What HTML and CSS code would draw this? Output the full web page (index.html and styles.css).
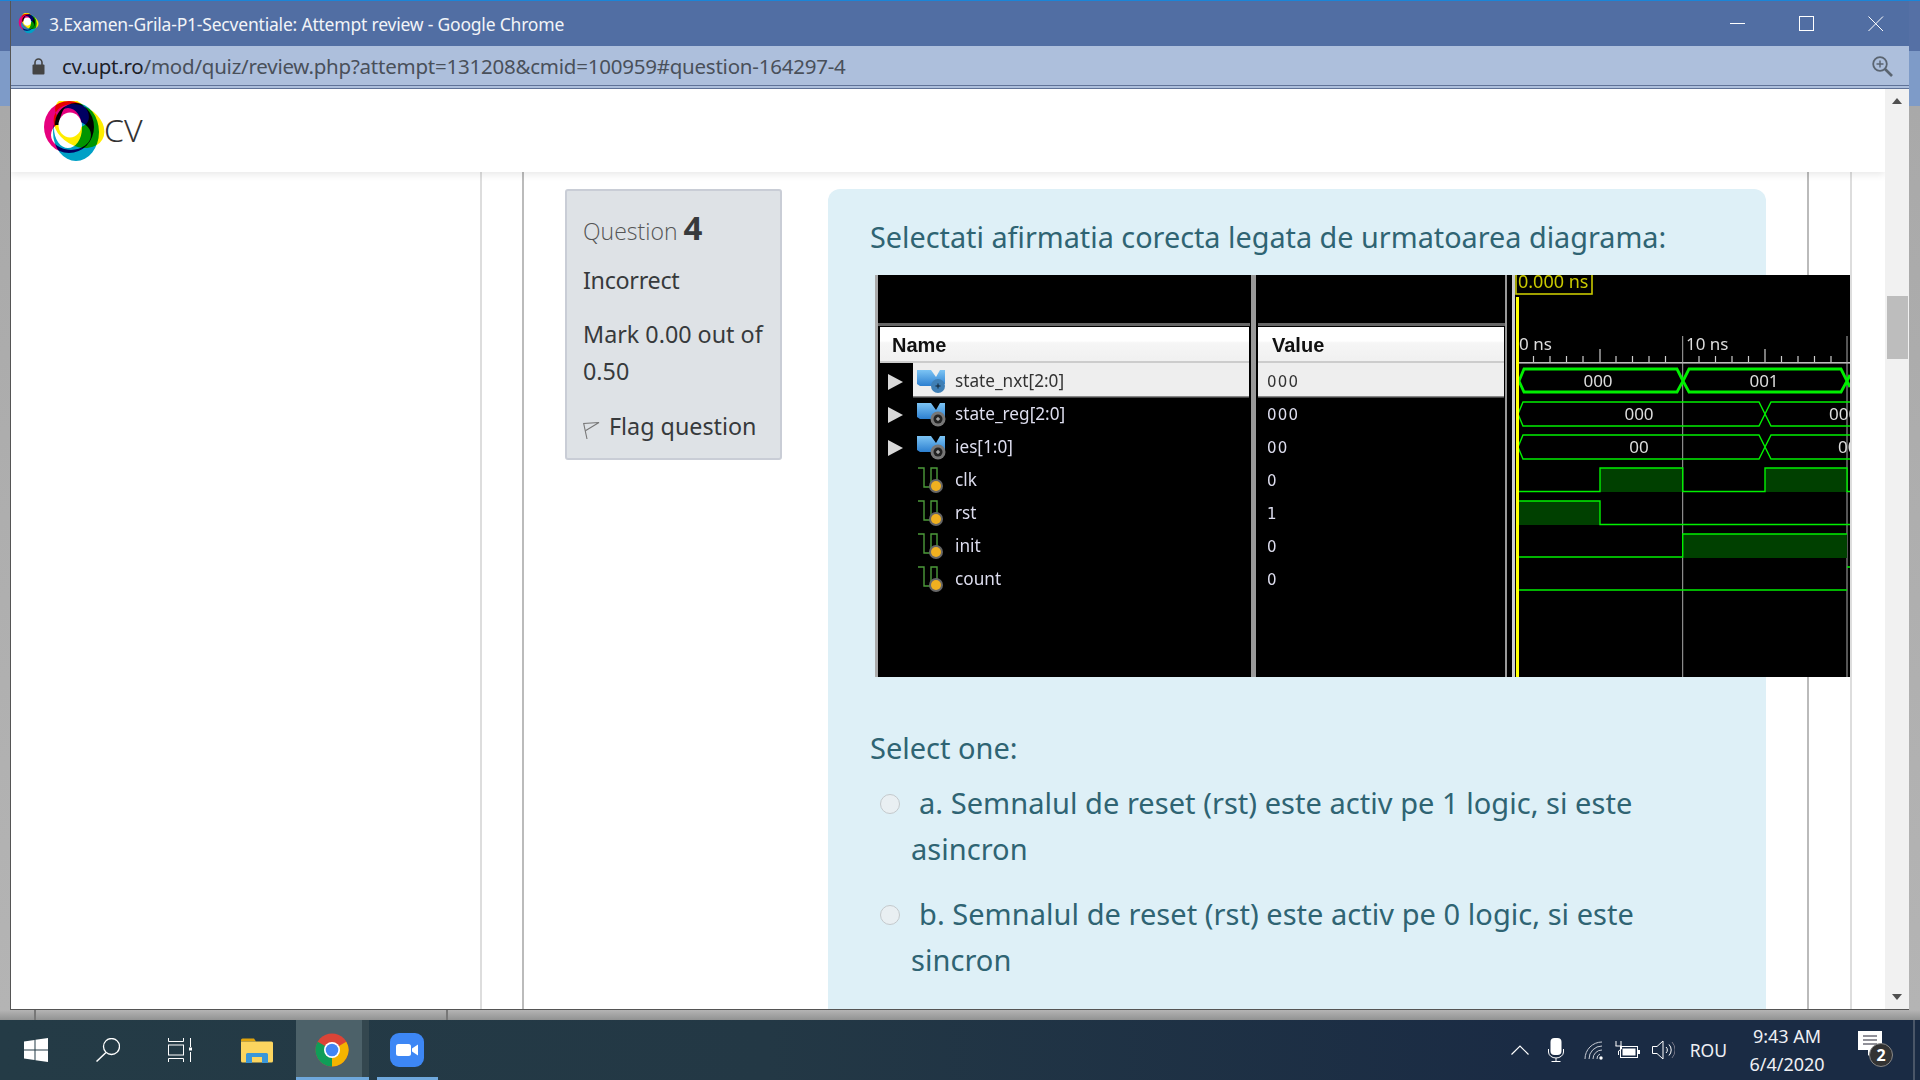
FILE: index.html
```html
<!doctype html>
<html>
<head>
    <title>3.Examen-Grila-P1-Secventiale: Attempt review</title>
    <link rel="stylesheet" href="styles.css">
</head>
<body>
<div class="desktop">
    <div class="window">
        <div class="titlebar">
            <svg class="favicon" viewBox="42 98 64 64">
                <defs>
                    <g id="logo-mark">
                        <path class="logo-ring" fill="#e6007e" fill-rule="evenodd" d="M44 126a25 26 0 1 0 50 0a25 26 0 1 0 -50 0ZM51 134a20 15 0 1 0 40 0a20 15 0 1 0 -40 0Z"/>
                        <path class="logo-ring" fill="#00a0c6" fill-rule="evenodd" d="M53 131a23 29 0 1 0 46 0a23 29 0 1 0 -46 0ZM54 127a14 20 0 1 0 28 0a14 20 0 1 0 -28 0Z"/>
                        <path class="logo-ring" fill="#ffed00" fill-rule="evenodd" transform="rotate(30 79 125)" d="M52 125a27 20 0 1 0 54 0a27 20 0 1 0 -54 0ZM48.400 117.200a18 13 0 1 0 36 0a18 13 0 1 0 -36 0Z"/>
                        <path d="M55 124C55 114 60 108 66 105C62 110 60 116 59 124Z" fill="#000"/>
                        <ellipse cx="70" cy="124" rx="11.500" ry="12.500" fill="#fff"/>
                    </g>
                </defs>
                <use href="#logo-mark"/>
            </svg>
            <span class="title-text">3.Examen-Grila-P1-Secventiale: Attempt review - Google Chrome</span>
            <div class="controls">
                <svg class="control" viewBox="0 0 16 16"><path d="M0 7.500H15" stroke="#fff" fill="none"/></svg>
                <svg class="control" viewBox="0 0 16 16"><rect x="0.500" y="0.500" width="14" height="14" stroke="#fff" fill="none"/></svg>
                <svg class="control" viewBox="0 0 16 16"><path d="M0.500 0.500L15 15M15 0.500L0.500 15" stroke="#fff" fill="none"/></svg>
            </div>
        </div>
        <div class="addressbar">
            <svg class="lock" viewBox="0 0 13 17"><path d="M3 7V4.500a3.500 3.500 0 0 1 7 0V7" stroke="#444" stroke-width="1.600" fill="none"/><rect x="0.500" y="6.500" width="12" height="10" rx="1" fill="#444"/></svg>
            <span class="url"><span class="url-host">cv.upt.ro</span>/mod/quiz/review.php?attempt=131208&amp;cmid=100959#question-164297-4</span>
            <svg class="zoom-icon" viewBox="0 0 21 21"><circle cx="8" cy="8" r="6.800" stroke="#5a6470" stroke-width="1.800" fill="none"/><path d="M13 13L20 20" stroke="#5a6470" stroke-width="2.600"/><path d="M4.500 8H11.500M8 4.500V11.500" stroke="#5a6470" stroke-width="1.400"/></svg>
        </div>
        <div class="viewport">
            <div class="page">
                <header class="site-header">
                    <svg class="logo" viewBox="44 100 62 60"><use href="#logo-mark"/></svg>
                    <span class="site-name">CV</span>
                </header>
                <div class="page-body">
                    <div class="col-nav"></div>
                    <div class="col-gap"></div>
                    <main class="col-main">
                        <aside class="info">
                            <h3 class="q-no">Question <b class="q-num">4</b></h3>
                            <div class="q-state">Incorrect</div>
                            <div class="q-grade">Mark 0.00 out of 0.50</div>
                            <div class="q-flag">
                                <svg class="flag" viewBox="0 0 17 19"><path d="M4 18L0.700 2.500L16 1.500L2.800 9.500" stroke="#777" stroke-width="1.100" fill="none"/></svg>
                                Flag question
                            </div>
                        </aside>
                        <section class="content">
                            <p class="qtext">Selectati afirmatia corecta legata de urmatoarea diagrama:</p>
                            <svg class="wave" viewBox="875 275 975 402" width="975" height="402">
                                <defs>
                                    <linearGradient id="head" x1="0" y1="0" x2="0" y2="1">
                                        <stop offset="0" stop-color="#fff"/>
                                        <stop offset="0.400" stop-color="#fff"/>
                                        <stop offset="0.450" stop-color="#f6f6f6"/>
                                        <stop offset="1" stop-color="#f0f0f0"/>
                                    </linearGradient>
                                    <linearGradient id="busfill" x1="0" y1="0" x2="0" y2="1">
                                        <stop offset="0" stop-color="#7cc4f4"/>
                                        <stop offset="1" stop-color="#2c7fd0"/>
                                    </linearGradient>
                                    <g id="arrow"><path d="M0 0L15 8L0 16Z" fill="#d8d8d8"/></g>
                                    <g id="bus-sel">
                                        <path d="M0 1H14L19 8L23 1H28V15H23L14 17H3L0 15Z" fill="url(#busfill)"/>
                                        <circle cx="21" cy="17" r="7" fill="#3f7fb5"/>
                                        <path d="M18.500 17H23.500M21 14.500V19.500" stroke="#123" stroke-width="1"/>
                                    </g>
                                    <g id="bus">
                                        <path d="M0 1H14L19 8L23 1H28V15H23L14 17H3L0 15Z" fill="url(#busfill)"/>
                                        <circle cx="21" cy="17" r="7.500" fill="#777"/>
                                        <circle cx="21" cy="17" r="4.500" fill="#222"/>
                                        <path d="M19 17H23M21 15V19" stroke="#ccc" stroke-width="1"/>
                                    </g>
                                    <g id="bit">
                                        <path d="M0 0H6V19H13V0H19V15" stroke="#4c9a3a" stroke-width="1.400" fill="none"/>
                                        <circle cx="18" cy="18" r="7" fill="#666"/>
                                        <circle cx="18" cy="18" r="5" fill="#f0b020"/>
                                    </g>
                                </defs>

                                <rect x="875" y="275" width="975" height="402" fill="#000"/>
                                <rect x="875" y="275" width="3" height="402" fill="#aaa"/>

                                <!-- pane separators -->
                                <rect x="878" y="323" width="372" height="3" fill="#666"/>
                                <rect x="1258" y="323" width="247" height="3" fill="#666"/>
                                <rect x="1251" y="275" width="5" height="402" fill="#999"/>
                                <rect x="1505" y="275" width="2" height="402" fill="#999"/>
                                <rect x="1512" y="275" width="3" height="402" fill="#ccc"/>

                                <!-- name pane -->
                                <rect x="880" y="327" width="369" height="35" fill="url(#head)"/>
                                <rect x="880" y="361" width="369" height="2" fill="#ccc"/>
                                <rect x="913" y="363" width="336" height="34" fill="#eee"/>
                                <rect x="913" y="396" width="336" height="1.500" fill="#888"/>
                                <text class="head-text" x="892" y="352">Name</text>

                                <use href="#arrow" x="888" y="374"/>
                                <use href="#arrow" x="888" y="407"/>
                                <use href="#arrow" x="888" y="440"/>
                                <use href="#bus-sel" x="917" y="369"/>
                                <use href="#bus" x="917" y="402"/>
                                <use href="#bus" x="917" y="435"/>
                                <use href="#bit" x="918" y="468"/>
                                <use href="#bit" x="918" y="501"/>
                                <use href="#bit" x="918" y="534"/>
                                <use href="#bit" x="918" y="567"/>

                                <text class="row-text row-sel" x="955" y="387">state_nxt[2:0]</text>
                                <text class="row-text" x="955" y="420">state_reg[2:0]</text>
                                <text class="row-text" x="955" y="453">ies[1:0]</text>
                                <text class="row-text" x="955" y="486">clk</text>
                                <text class="row-text" x="955" y="519">rst</text>
                                <text class="row-text" x="955" y="552">init</text>
                                <text class="row-text" x="955" y="585">count</text>

                                <!-- value pane -->
                                <rect x="1258" y="327" width="246" height="35" fill="url(#head)"/>
                                <rect x="1258" y="361" width="246" height="2" fill="#ccc"/>
                                <rect x="1258" y="363" width="246" height="34" fill="#eee"/>
                                <rect x="1258" y="396" width="246" height="1.500" fill="#888"/>
                                <text class="head-text" x="1272" y="352">Value</text>

                                <text class="val-text row-sel" x="1267" y="387">000</text>
                                <text class="val-text" x="1267" y="420">000</text>
                                <text class="val-text" x="1267" y="453">00</text>
                                <text class="val-text" x="1267" y="486">0</text>
                                <text class="val-text" x="1267" y="519">1</text>
                                <text class="val-text" x="1267" y="552">0</text>
                                <text class="val-text" x="1267" y="585">0</text>

                                <!-- ruler -->
                                <rect x="1518" y="362" width="332" height="1.600" fill="#bbb"/>
                                <path class="tick" d="M1533.500 356V362M1550 356V362M1566.500 356V362M1583 356V362M1600 349V362M1616 356V362M1632.500 356V362M1649 356V362M1665.500 356V362M1699 356V362M1715.500 356V362M1732 356V362M1748.500 356V362M1765 349V362M1781.500 356V362M1798 356V362M1814.500 356V362M1831 356V362"/>
                                <path class="marker" d="M1682.700 336V677M1847 336V677"/>
                                <text class="ruler-text" x="1519" y="350">0 ns</text>
                                <text class="ruler-text" x="1686" y="350">10 ns</text>

                                <!-- waveforms -->
                                <path class="high" d="M1600 468H1682.700V492H1600ZM1765 468H1847V492H1765ZM1518 501H1600V525H1518ZM1682.700 534H1847V558H1682.700Z"/>
                                <path class="bus-thick" d="M1519 381L1524 369H1677L1683 381L1677 392H1524ZM1683 381L1689 369H1841L1847 381L1841 392H1689ZM1847 381L1850 375M1847 381L1850 387"/>
                                <path class="line" d="M1518 414L1523 402H1759L1771 426H1850M1518 414L1523 426H1759L1771 402H1850"/>
                                <path class="line" d="M1518 447L1523 435H1759L1771 459H1850M1518 447L1523 459H1759L1771 435H1850"/>
                                <path class="line" d="M1518 491.500H1600V468H1682.700V491.500H1765V468H1847V491.500H1850"/>
                                <path class="line" d="M1518 501H1600V524.500H1850"/>
                                <path class="line" d="M1518 557H1682.700V534H1847"/>
                                <path class="line" d="M1518 590H1847M1847 567H1850"/>
                                <text class="wave-text" x="1598" y="387" text-anchor="middle">000</text>
                                <text class="wave-text" x="1764" y="387" text-anchor="middle">001</text>
                                <text class="wave-text" x="1639" y="420" text-anchor="middle">000</text>
                                <text class="wave-text" x="1829" y="420">000</text>
                                <text class="wave-text" x="1639" y="453" text-anchor="middle">00</text>
                                <text class="wave-text" x="1838" y="453">00</text>

                                <!-- cursor -->
                                <rect class="cursor" x="1516" y="297" width="3" height="380"/>
                                <rect class="cursor-box" x="1516" y="270" width="76" height="24"/>
                                <text class="cursor-text" x="1518" y="288">0.000 ns</text>
                            </svg>
                            <p class="prompt">Select one:</p>
                            <div class="option"><span class="radio"></span>a. Semnalul de reset (rst) este activ pe 1 logic, si este asincron</div>
                            <div class="option"><span class="radio"></span>b. Semnalul de reset (rst) este activ pe 0 logic, si este sincron</div>
                        </section>
                    </main>
                    <div class="col-right"></div>
                </div>
            </div>
            <div class="scrollbar">
                <div class="scroll-btn"><span class="arrow-up"></span></div>
                <div class="scroll-track"><div class="scroll-thumb"></div></div>
                <div class="scroll-btn"><span class="arrow-down"></span></div>
            </div>
        </div>
    </div>
</div>
<footer class="taskbar">
    <svg class="tb-start" viewBox="0 0 24 24"><path d="M0 3.500L10.500 2V11.500H0ZM11.500 1.800L24 0V11.500H11.500ZM0 12.500H10.500V22L0 20.500ZM11.500 12.500H24V24L11.500 22.200Z" fill="#fff"/></svg>
    <svg class="tb-search" viewBox="0 0 24 24"><circle cx="15.500" cy="8.500" r="8" stroke="#fff" stroke-width="1.300" fill="none"/><path d="M10 14.500L0.500 23.500" stroke="#fff" stroke-width="1.500"/></svg>
    <svg class="tb-view" viewBox="0 0 24 24"><path d="M0.500 0V3.500H15.500V0M0.500 24V20.500H15.500V24" stroke="#fff" fill="none"/><rect x="0.500" y="7" width="15" height="10" stroke="#fff" fill="none"/><path d="M22.500 0V9M22.500 14V24" stroke="#fff"/><rect x="21" y="9.500" width="3" height="3" fill="#fff"/></svg>
    <svg class="tb-files" viewBox="0 0 32 26"><path d="M0 3a1.500 1.500 0 0 1 1.500-1.500H13l2 3H0Z" fill="#e0a30c"/><path d="M0 4.500H30.500a1.500 1.500 0 0 1 1.500 1.500V24a1.500 1.500 0 0 1-1.500 1.500H1.500A1.500 1.500 0 0 1 0 24Z" fill="#fcd55f"/><path d="M5 26V17.500a1.500 1.500 0 0 1 1.500-1.500H25.500a1.500 1.500 0 0 1 1.500 1.500V26H21V20H11V26Z" fill="#3a96d8"/></svg>
    <div class="tb-chrome">
        <svg class="chrome" viewBox="0 0 34 34">
            <circle cx="17" cy="17" r="16.500" fill="#db4437"/>
            <path d="M17 17L31.300 8.750A16.500 16.500 0 0 1 17 33.500Z" fill="#f4b400"/>
            <path d="M17 17L17 33.500A16.500 16.500 0 0 1 2.700 8.750Z" fill="#0f9d58"/>
            <circle cx="17" cy="17" r="8" fill="#fff"/>
            <circle cx="17" cy="17" r="6.300" fill="#4285f4"/>
        </svg>
    </div>
    <div class="tb-zoom">
        <div class="zoom-tile">
            <svg class="zoom-cam" viewBox="0 0 22 12"><rect x="0" y="0" width="15" height="12" rx="2.500" fill="#fff"/><path d="M16 4.500L22 0.500V11.500L16 7.500Z" fill="#fff"/></svg>
        </div>
    </div>
    <div class="tray">
        <svg class="tray-chevron" viewBox="0 0 18 10"><path d="M0.500 9.500L9 1L17.500 9.500" stroke="#fff" stroke-width="1.200" fill="none"/></svg>
        <svg class="tray-mic" viewBox="0 0 16 24"><rect x="2.500" y="0" width="11" height="17" rx="4" fill="#fff"/><path d="M0.500 11V14a7.500 6 0 0 0 15 0V11M8 20V23.500M3.500 23.500H12.500" stroke="#fff" fill="none"/></svg>
        <svg class="tray-wifi" viewBox="0 0 20 20"><path d="M1 19A17 17 0 0 1 18 2M5 19A13 13 0 0 1 18 6M9 19A9 9 0 0 1 18 10M13 19A5 5 0 0 1 16 14" stroke="#c8ccd4" fill="none"/><circle cx="17" cy="18" r="1.700" fill="#fff"/></svg>
        <svg class="tray-battery" viewBox="0 0 25 18"><path d="M1 0V5M6 0V5M0.500 5H6.500V8L3.500 10V14" stroke="#fff" fill="none"/><rect x="5.500" y="5.500" width="17" height="11" stroke="#fff" fill="none"/><rect x="7.500" y="7.500" width="13" height="7" fill="#fff"/><rect x="23" y="9" width="2" height="4" fill="#fff"/></svg>
        <svg class="tray-volume" viewBox="0 0 23 20"><path d="M0.500 6.500H5L11 1V19L5 13.500H0.500Z" stroke="#fff" fill="none"/><path d="M14 7A4 4 0 0 1 14 13M17 4.500A8 8 0 0 1 17 15.500" stroke="#fff" fill="none"/><path d="M20 2A12 12 0 0 1 20 18" stroke="#778" fill="none"/></svg>
        <span class="tray-lang">ROU</span>
        <div class="clock"><div>9:43 AM</div><div>6/4/2020</div></div>
        <div class="notify">
            <svg class="notify-box" viewBox="0 0 24 26"><path d="M0 0H24V19H15L10 25V19H0Z" fill="#fff"/><path d="M5 5H19M5 9H19M5 13H19" stroke="#223" stroke-width="1"/></svg>
            <span class="notify-badge">2</span>
        </div>
        <div class="show-desktop"></div>
    </div>
</footer>
</body>
</html>
```

FILE: styles.css
```css
* {
    box-sizing: border-box;
}
html, body {
    margin: 0;
    padding: 0;
}
body {
    width: 1920px;
    height: 1080px;
    overflow: hidden;
    font-family: "Noto Sans", "Open Sans", sans-serif;
    display: flex;
    flex-direction: column;
}
svg {
    display: block;
    flex: none;
}

/* Desktop behind the browser window */
.desktop {
    height: 1020px;
    padding: 0 11px 10px 10px;
    border-top: 1px solid #1a85d8;
    background:
        linear-gradient(#777, #777) 34px 1009px / 2px 11px no-repeat,
        linear-gradient(#777, #777) 446px 1009px / 2px 11px no-repeat,
        linear-gradient(#5570a5 0, #5570a5 50px, #7e9bc8 50px, #7e9bc8 105px, #a9a9a9 105px, #b4b4b4 1009px, #8e8f8f 1020px);
}
.window {
    height: 100%;
    display: flex;
    flex-direction: column;
    border: solid #555;
    border-width: 0 0 1px 1px;
    background: #fff;
}

/* Title bar */
.titlebar {
    height: 45px;
    flex: none;
    display: flex;
    align-items: center;
    padding-left: 7px;
    background: #516ea3;
    color: #f2f4f8;
}
.favicon {
    width: 21px;
    height: 21px;
    isolation: isolate;
}
.logo-ring {
    mix-blend-mode: multiply;
}
.title-text {
    margin-left: 10px;
    font-size: 17.5px;
    letter-spacing: -0.2px;
    white-space: nowrap;
}
.controls {
    margin-left: auto;
    display: flex;
    gap: 53px;
    padding-right: 25px;
}
.control {
    width: 16px;
    height: 16px;
}

/* Address bar */
.addressbar {
    height: 43px;
    flex: none;
    display: flex;
    align-items: center;
    padding: 1px 16px 0 21px;
    background: #adbfdc;
    border-bottom: 4px double #5f7297;
}
.lock {
    width: 13px;
    height: 17px;
}
.url {
    margin-left: 17px;
    font-size: 20.5px;
    color: #49505a;
    letter-spacing: -0.23px;
    white-space: nowrap;
}
.url-host {
    color: #1d2128;
}
.zoom-icon {
    margin-left: auto;
    width: 21px;
    height: 21px;
}

/* Page */
.viewport {
    flex: 1;
    min-height: 0;
    display: flex;
}
.page {
    flex: 1;
    min-width: 0;
    display: flex;
    flex-direction: column;
    overflow: hidden;
}
.site-header {
    height: 83px;
    flex: none;
    display: flex;
    align-items: center;
    padding: 0 0 0 33px;
    background: #fff;
    box-shadow: 0 2px 8px rgba(0, 0, 0, .1);
    position: relative;
    z-index: 2;
}
.logo {
    width: 62px;
    height: 60px;
    isolation: isolate;
}
.site-name {
    margin: -2px 0 0 -2px;
    font-size: 32px;
    font-weight: 300;
    color: #333;
}
.page-body {
    flex: 1;
    min-height: 0;
    display: flex;
}
.col-nav {
    width: 471px;
    border-right: 2px solid #ddd;
}
.col-gap {
    width: 42px;
    border-right: 2px solid #bbb;
}
.col-main {
    width: 1285px;
    border-right: 2px solid #bbb;
    padding: 17px 0 0 41px;
    display: flex;
}
.col-right {
    width: 43px;
    border-right: 2px solid #ddd;
}

/* Question info block */
.info {
    width: 217px;
    height: 271px;
    flex: none;
    padding: 18px 8px 0 16px;
    background: #dee2e6;
    border: 2px solid #c9cdd6;
    border-radius: 3px;
    font-size: 23.3px;
    line-height: 37px;
    color: #373a3c;
}
.q-no {
    margin: 0;
    font-family: "Open Sans", "Noto Sans", sans-serif;
    font-size: 23px;
    font-weight: 300;
    color: #555;
}
.q-num {
    font-size: 33px;
    font-weight: 700;
    color: #373a3c;
}
.q-state {
    margin-top: 12px;
    letter-spacing: -0.3px;
}
.q-grade {
    margin-top: 17px;
}
.q-flag {
    margin-top: 18px;
    display: flex;
    align-items: center;
    gap: 9px;
}
.flag {
    width: 17px;
    height: 19px;
    margin-top: 7px;
}

/* Question text block */
.content {
    width: 938px;
    flex: none;
    margin-left: 46px;
    padding: 25px 0 0 42px;
    background: #def0f7;
    border-radius: 12px 12px 0 0;
    font-size: 29px;
    line-height: 46px;
    color: #2f6473;
}
.qtext {
    margin: 0;
    font-size: 28.8px;
}
.wave {
    margin: 15px 0 0 5px;
    filter: blur(0.45px);
}
.prompt {
    margin: 48px 0 0;
}
.option {
    margin: 9px 0 19px;
    padding: 0 60px 0 41px;
    letter-spacing: 0.04px;
}
.radio {
    display: inline-block;
    width: 20px;
    height: 20px;
    margin: 0 19px 0 -31px;
    vertical-align: 0;
    border-radius: 50%;
    background: #e9eff2;
    border: 1px solid #c4c9cc;
}

/* Simulator screenshot */
.head-text {
    font: 700 20px "Liberation Sans", sans-serif;
    fill: #111;
}
.row-text {
    font: 17.2px "Noto Sans", sans-serif;
    fill: #dde;
}
.val-text {
    font: 15px "DejaVu Sans", sans-serif;
    letter-spacing: 1.2px;
    fill: #dde;
}
.row-sel {
    fill: #333;
}
.ruler-text, .wave-text {
    font: 17px "Noto Sans", sans-serif;
    fill: #ddd;
}
.tick {
    stroke: #ccc;
    stroke-width: 1.2;
    fill: none;
}
.marker {
    stroke: #aaa;
    stroke-width: 1;
    fill: none;
}
.high {
    fill: #004000;
}
.line {
    stroke: #00f000;
    stroke-width: 1.4;
    fill: none;
}
.bus-thick {
    stroke: #00f000;
    stroke-width: 2.8;
    fill: none;
}
.cursor {
    fill: #ffff00;
}
.cursor-box {
    stroke: #c8c800;
    stroke-width: 1.6;
    fill: none;
}
.cursor-text {
    font: 18px "Noto Sans", sans-serif;
    fill: #c8c800;
}

/* Scrollbar */
.scrollbar {
    width: 24px;
    flex: none;
    display: flex;
    flex-direction: column;
    background: #f1f1f1;
}
.scroll-btn {
    height: 24px;
    flex: none;
    display: flex;
    align-items: center;
    justify-content: center;
}
.scroll-track {
    flex: 1;
    padding: 183px 1px 0 2px;
}
.scroll-thumb {
    height: 63px;
    background: #bdbdbd;
}
.arrow-up, .arrow-down {
    width: 0;
    height: 0;
    border-left: 5.5px solid transparent;
    border-right: 5.5px solid transparent;
}
.arrow-up {
    border-bottom: 6px solid #505050;
}
.arrow-down {
    border-top: 6px solid #505050;
}

/* Taskbar */
.taskbar {
    height: 60px;
    flex: none;
    display: flex;
    align-items: center;
    padding-left: 24px;
    background: linear-gradient(90deg, #243b46 0, #233845 40%, #1a2b44 80%);
    color: #eef0f4;
}
.tb-start, .tb-search, .tb-view {
    width: 24px;
    height: 24px;
}
.tb-search {
    margin-left: 48px;
}
.tb-view {
    margin-left: 48px;
}
.tb-files {
    width: 32px;
    height: 26px;
    margin-left: 49px;
}
.tb-chrome {
    width: 73px;
    height: 60px;
    margin-left: 23px;
    padding: 13px 0 0 19px;
    background: linear-gradient(90deg, #4c6169 66px, #34474f 66px);
    border-bottom: 3px solid #6fa8dc;
}
.chrome {
    width: 34px;
    height: 34px;
}
.tb-zoom {
    width: 61px;
    height: 60px;
    margin-left: 8px;
    padding: 13px 0 0 13px;
    border-bottom: 3px solid #6fa8dc;
}
.zoom-tile {
    width: 34px;
    height: 34px;
    border-radius: 9px;
    background: #3d87f5;
    display: flex;
    align-items: center;
    justify-content: center;
}
.zoom-cam {
    width: 22px;
    height: 12px;
}
.tray {
    margin-left: auto;
    height: 60px;
    display: flex;
    align-items: center;
}
.tray-chevron {
    width: 18px;
    height: 10px;
}
.tray-mic {
    width: 16px;
    height: 24px;
    margin-left: 19px;
}
.tray-wifi {
    width: 20px;
    height: 20px;
    margin-left: 20px;
}
.tray-battery {
    width: 25px;
    height: 18px;
    margin-left: 11px;
}
.tray-volume {
    width: 23px;
    height: 20px;
    margin-left: 12px;
}
.tray-lang {
    margin-left: 15px;
    font-size: 17.5px;
}
.clock {
    width: 102px;
    margin-left: 9px;
    text-align: center;
    font-size: 18px;
    line-height: 28px;
}
.notify {
    width: 36px;
    height: 46px;
    margin-left: 20px;
    padding-top: 4px;
    position: relative;
}
.notify-box {
    width: 24px;
    height: 26px;
}
.notify-badge {
    position: absolute;
    left: 11px;
    top: 16px;
    width: 24px;
    height: 24px;
    border-radius: 50%;
    background: #333;
    border: 1px solid #888;
    font-size: 16px;
    font-weight: 700;
    line-height: 22px;
    text-align: center;
    color: #fff;
}
.show-desktop {
    width: 7px;
    height: 60px;
    border-left: 2px solid #4a5668;
    margin-left: 19px;
}
```
